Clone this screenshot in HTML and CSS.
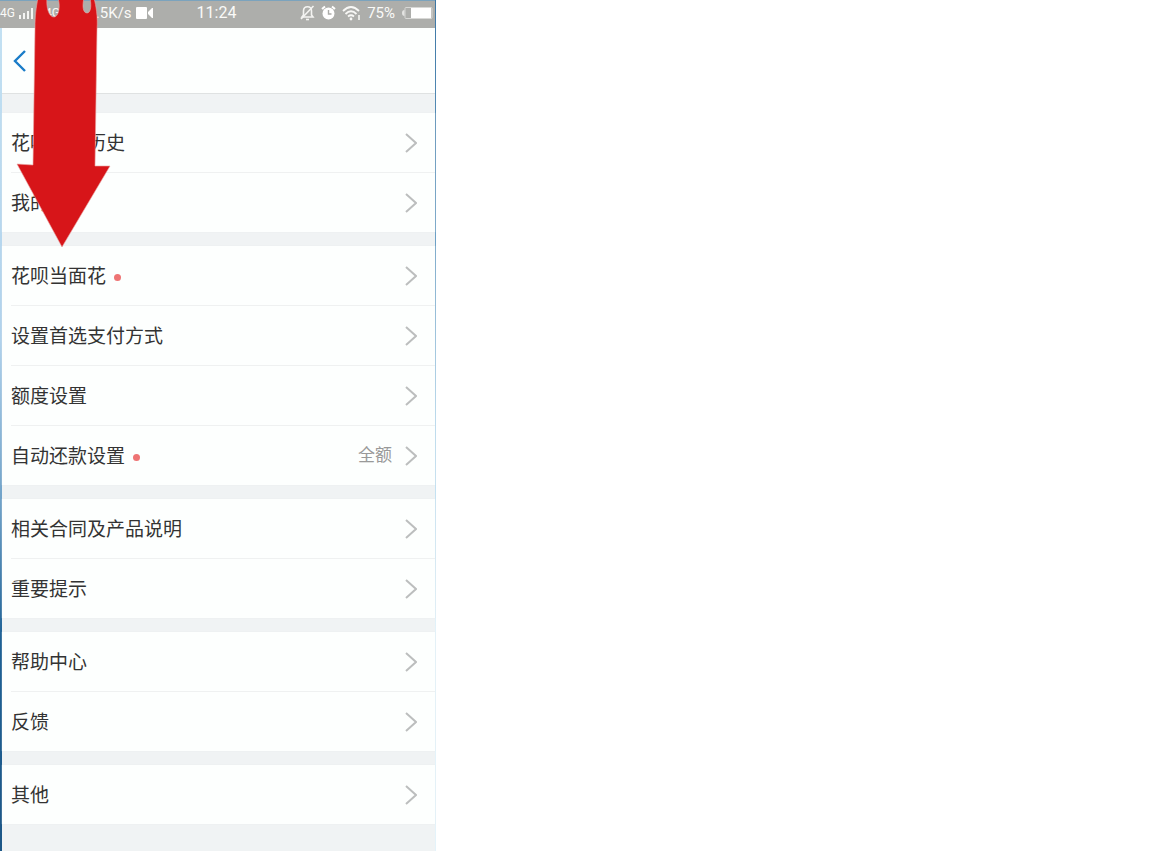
FILE: index.html
```html
<!DOCTYPE html>
<html lang="zh-CN">
<head>
  <meta charset="UTF-8">
  <meta name="viewport" content="width=device-width, initial-scale=1.0">
  <title>花呗设置</title>
  <link rel="stylesheet" href="styles.css">
</head>
<body>
  <svg width="0" height="0" class="sprite" aria-hidden="true">
    <symbol id="chevron" viewBox="0 0 12 20">
      <path d="M1 1 L11 10 L1 19" fill="none" stroke="currentColor" stroke-width="2"/>
    </symbol>
  </svg>

  <div class="phone">
    <div class="status-bar">
      <div class="status-left">
        <span class="network">4G</span>
        <svg class="signal" width="14" height="12" viewBox="0 0 14 12" fill="#f4f4f2">
          <rect x="0" y="8" width="2" height="4"/>
          <rect x="4" y="6" width="2" height="6"/>
          <rect x="8" y="4" width="2" height="8"/>
          <rect x="12" y="1" width="2" height="11"/>
        </svg>
        <span class="network second">4G</span>
        <span class="speed">.5K/s</span>
        <svg width="17" height="12" viewBox="0 0 17 12" fill="#fff">
          <rect x="0" y="0" width="11" height="12" rx="1"/>
          <path d="M12 5 L16 1 H17 V11 H16 L12 7 Z"/>
        </svg>
      </div>
      <span class="clock">11:24</span>
      <div class="status-right">
        <svg width="15" height="16" viewBox="0 0 15 16" fill="none" stroke="#f4f4f2" stroke-width="1.6">
          <path d="M2 12 H13 L11.5 10 V6 C11.5 3 10 1.8 7.5 1.8 S3.5 3 3.5 6 V10 Z"/>
          <path d="M6 14.5 H9"/>
          <path d="M13.5 1 L1 14"/>
        </svg>
        <svg width="15" height="16" viewBox="0 0 15 16">
          <circle cx="7.5" cy="8.5" r="6" fill="#fff"/>
          <path d="M1 4 L4 1.5 M14 4 L11 1.5" stroke="#fff" stroke-width="2"/>
          <path d="M7.5 5 V9 H10.5" fill="none" stroke="#aaaba8" stroke-width="1.4"/>
        </svg>
        <svg width="19" height="16" viewBox="0 0 19 16" fill="none" stroke="#f8f8f6" stroke-width="1.8">
          <path d="M1 6 Q9 -2 17 6"/>
          <path d="M3.5 9 Q9 3.5 14.5 9"/>
          <path d="M6 11.5 Q9 9 12 11.5"/>
          <circle cx="9" cy="14" r="1.4" fill="#f8f8f6" stroke="none"/>
          <path d="M17 10 V15" stroke-width="1.5"/>
        </svg>
        <span class="percent">75%</span>
        <svg width="32" height="14" viewBox="0 0 32 14">
          <path d="M3.5 4 Q1 4 1 7 T3.5 10" fill="#e4e4e2"/>
          <rect x="4" y="1.5" width="27" height="11" rx="1" fill="none" stroke="#d8d8d6"/>
          <rect x="10" y="2" width="20" height="10" fill="#fff"/>
        </svg>
      </div>
    </div>

    <header class="nav">
      <button class="back" aria-label="返回">
        <svg width="14" height="22" viewBox="0 0 14 22">
          <path d="M13 1 L3 11 L13 21" fill="none" stroke="#1a7cc8" stroke-width="2.4"/>
        </svg>
      </button>
    </header>

    <main class="groups">
      <nav class="group">
        <a class="row" href="#"><span class="label">花呗还款历史</span><svg class="chevron"><use href="#chevron"/></svg></a>
        <a class="row" href="#"><span class="label">我的</span><svg class="chevron"><use href="#chevron"/></svg></a>
      </nav>

      <nav class="group">
        <a class="row" href="#"><span class="label">花呗当面花<i class="dot"></i></span><svg class="chevron"><use href="#chevron"/></svg></a>
        <a class="row" href="#"><span class="label">设置首选支付方式</span><svg class="chevron"><use href="#chevron"/></svg></a>
        <a class="row" href="#"><span class="label">额度设置</span><svg class="chevron"><use href="#chevron"/></svg></a>
        <a class="row" href="#"><span class="label">自动还款设置<i class="dot"></i></span><span class="value">全额</span><svg class="chevron"><use href="#chevron"/></svg></a>
      </nav>

      <nav class="group">
        <a class="row" href="#"><span class="label">相关合同及产品说明</span><svg class="chevron"><use href="#chevron"/></svg></a>
        <a class="row" href="#"><span class="label">重要提示</span><svg class="chevron"><use href="#chevron"/></svg></a>
      </nav>

      <nav class="group">
        <a class="row" href="#"><span class="label">帮助中心</span><svg class="chevron"><use href="#chevron"/></svg></a>
        <a class="row" href="#"><span class="label">反馈</span><svg class="chevron"><use href="#chevron"/></svg></a>
      </nav>

      <nav class="group">
        <a class="row" href="#"><span class="label">其他</span><svg class="chevron"><use href="#chevron"/></svg></a>
      </nav>
    </main>

    <!-- red arrow pointing at 花呗当面花 -->
    <svg class="arrow" width="112" height="250" viewBox="0 0 112 250">
      <path d="M38 -2 C36 8 35 16 35 28 L33 165 L17 164 L62 247 L110 166 L95 166 L97 30 C98 16 96 6 94 -2 L90 -2 C92 8 90 13 87 13 C83 13 82 6 84 -2 L58 -2 C61 8 58 17 54 17 C49 17 46 8 47 -2 Z"
        fill="#d71519" stroke="#e9a5a3" stroke-width="0.6"/>
    </svg>
  </div>
</body>
</html>
```

FILE: styles.css
```css
body {
  margin: 0;
  background-color: #fff;
  font-family: "Liberation Sans", "Noto Sans CJK SC", sans-serif;
}

.sprite {
  position: absolute;
}

.phone {
  position: relative;
  display: flex;
  flex-direction: column;
  box-sizing: border-box;
  width: 100%;
  max-width: 436px;
  min-height: 100vh;
  padding: 0 1px 0 2px;
  background:
    linear-gradient(#c4e2f3, #b0d2ec 40%, #6c9fc6 60%, #1f6296 75%, #1d5787) left / 2px 100% no-repeat,
    linear-gradient(#3c76a4, #6fa3c8 30%, #b5d9ee 50%, #e4f3fa 75%) right / 1px 100% no-repeat,
    #f0f3f4;
}

.status-bar {
  display: grid;
  grid-template-columns: 1fr auto 1fr;
  align-items: center;
  box-sizing: border-box;
  height: 28px;
  margin-left: -2px;
  padding: 0 2px 3px 0;
  border-top: 1px solid #7ba3bd;
  background-color: #adaeab;
  color: #fafaf8;
  font-family: Roboto, sans-serif;
  font-size: 15px;
  line-height: 24px;
}

.status-left,
.status-right {
  display: flex;
  align-items: center;
  height: 24px;
}

.status-left {
  gap: 4px;
}

.status-right {
  justify-content: flex-end;
  gap: 6px;
}

.network {
  font-size: 12px;
}

.second {
  margin-left: 8px;
}

.speed {
  margin-left: 32px;
}

.clock {
  font-size: 16px;
}

.nav {
  display: flex;
  align-items: center;
  box-sizing: border-box;
  height: 66px;
  padding: 0 10px;
  border-bottom: 1px solid #dfe2e2;
  background-color: #fdfffe;
}

.back {
  display: flex;
  padding: 0;
  border: none;
  background: none;
  cursor: pointer;
}

.groups {
  display: flex;
  flex-direction: column;
  gap: 14px;
  padding-top: 19px;
}

.group {
  background-color: #fdfffe;
  box-shadow: 0 0 1px #e4e7e7;
}

.row {
  display: flex;
  align-items: center;
  height: 59px;
  margin-left: 9px;
  padding-right: 18px;
  color: #333;
  font-size: 19px;
  line-height: 28px;
  text-decoration: none;
}

.row + .row {
  border-top: 1px solid #eff1f1;
}

.label {
  display: flex;
  align-items: center;
  padding-top: 2px;
}

.dot {
  width: 7px;
  height: 7px;
  margin: 2px 0 0 8px;
  border-radius: 50%;
  background-color: #ee7474;
}

.value {
  margin-left: auto;
  color: #999;
  font-size: 17px;
}

.chevron {
  width: 12px;
  height: 20px;
  margin-left: auto;
  color: #bcbebe;
}

.value + .chevron {
  margin-left: 13px;
}

.arrow {
  position: absolute;
  top: 0;
  left: 0;
}
```
